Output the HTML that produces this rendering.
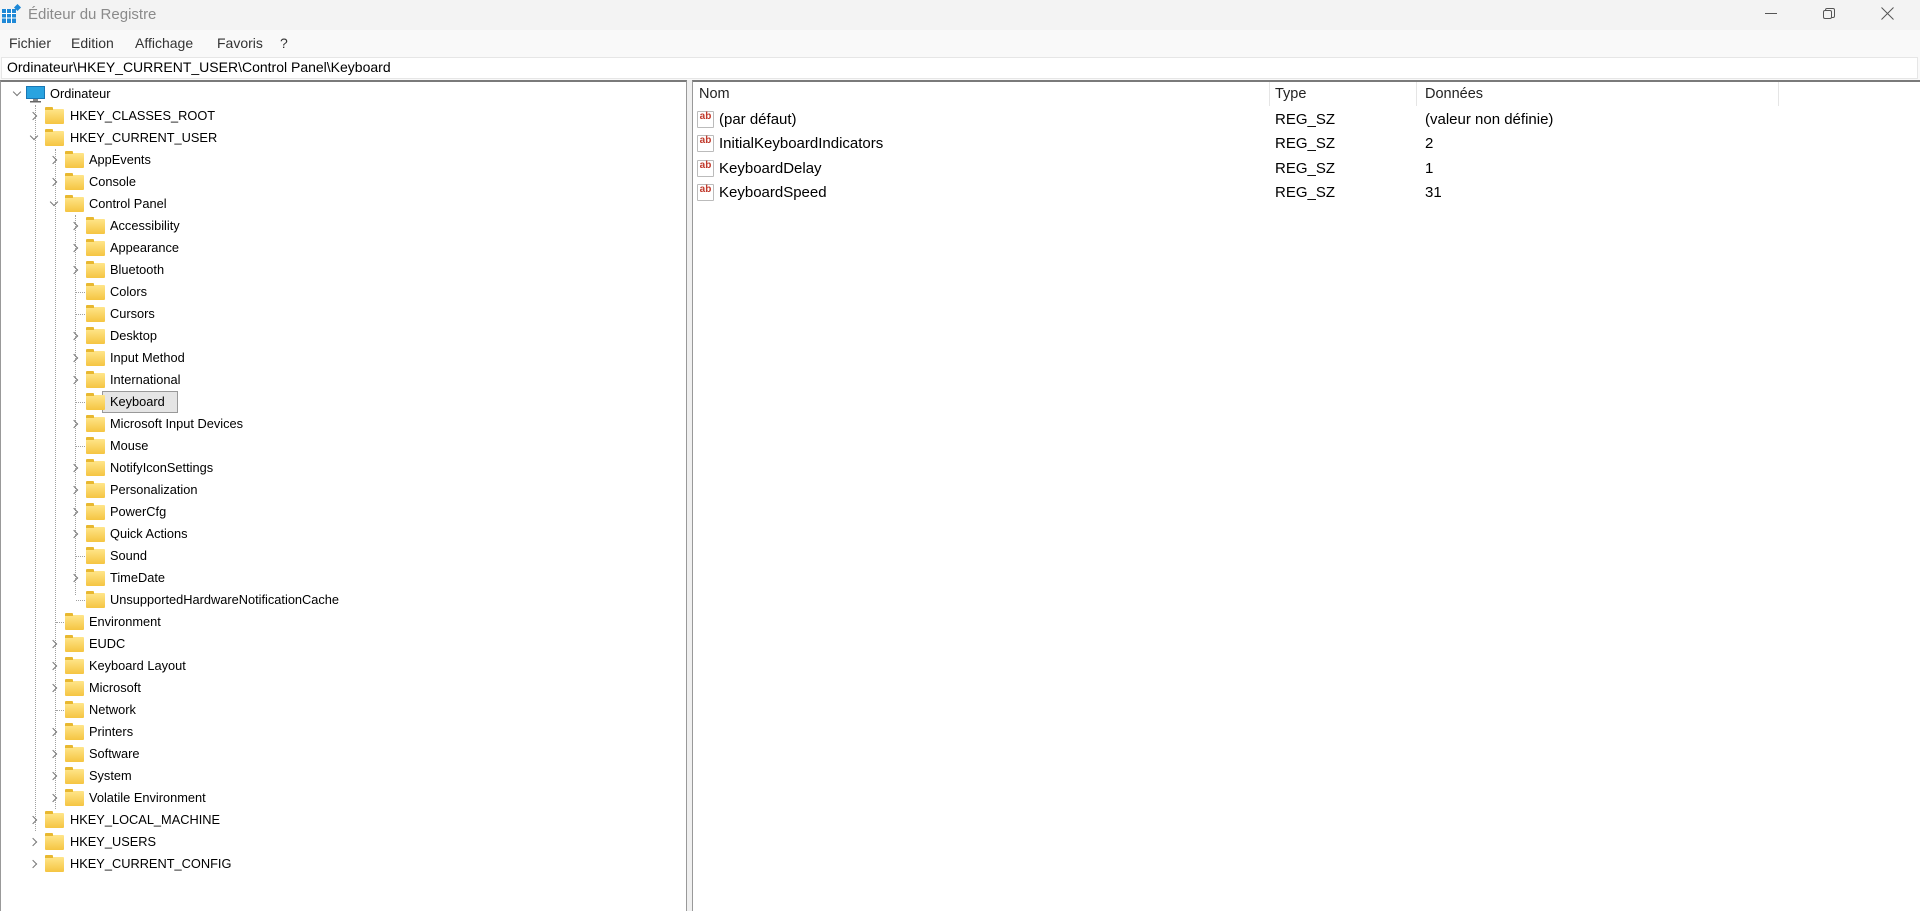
<!DOCTYPE html>
<html><head><meta charset="utf-8"><style>
*{margin:0;padding:0;box-sizing:border-box}
body{width:1920px;height:911px;overflow:hidden;background:#f0f0f0;font-family:"Liberation Sans",sans-serif;font-size:12.8px;color:#000;position:relative}
.abs{position:absolute}
.title{left:0;top:0;width:1920px;height:30px;background:#f3f3f3}
.menu{left:0;top:30px;width:1920px;height:26px;background:#f9f9f9}
.menu span{position:absolute;top:5px;color:#333;font-size:14px}
.addr{left:0;top:56px;width:1920px;height:24px;background:#f9f9f9}
.addrbox{left:1px;top:57px;width:1917px;height:22px;background:#fff;border:1px solid #e6e6e6}
.lp{left:0;top:80px;width:687px;height:831px;background:#fff;border-top:2px solid #7a7a7a;border-left:1px solid #999;border-right:1px solid #999}
.rp{left:692px;top:80px;width:1228px;height:831px;background:#fff;border-top:2px solid #7a7a7a;border-left:1px solid #999}
.row{position:absolute;height:22px;line-height:22px;white-space:nowrap;margin-top:1px}
.chev{position:absolute;width:6px;height:6px;border-right:1.3px solid #777;border-bottom:1.3px solid #777}
.cr{transform:rotate(-45deg)}
.cd{transform:rotate(45deg)}
.fold{position:absolute;width:19px;height:15px;background:linear-gradient(#ffe58a,#f5c542);border-radius:1px}
.fold:before{content:"";position:absolute;left:0;top:-2px;width:8px;height:3px;background:#e8b830;border-radius:1px 1px 0 0}
.vl{position:absolute;width:0;border-left:1px dotted #a0a0a0}
.hl{position:absolute;height:0;border-top:1px dotted #a0a0a0}
.sel{position:absolute;background:#e5e5e5;border:1px solid #999;}
.hdr{position:absolute;top:86px;color:#222;font-size:14.5px}
.cs{position:absolute;top:82px;width:1px;height:24px;background:#e5e5e5}
.rr{position:absolute;font-size:15px;white-space:nowrap;line-height:20px}
.ab{position:absolute;width:17px;height:17px;background:#fff;border:1px solid #bbb;border-radius:1px;font-size:10px;font-weight:bold;color:#c0392b;line-height:10px;text-align:center}
</style></head><body>
<div class="abs title"></div>
<svg class="abs" style="left:2px;top:4px" width="20" height="20" viewBox="0 0 20 20"><rect x="0" y="5" width="14" height="14" fill="#1e88d6"/><path d="M0 9.5H14M0 14H14M4.5 5V19M9.5 5V19" stroke="#fff" stroke-width="1"/><rect x="13" y="1" width="5" height="5" fill="#1e88d6" transform="rotate(45 15.5 3.5)"/></svg>
<div class="abs" style="left:28px;top:6px;font-size:15px;color:#8a8a8a">Éditeur du Registre</div>
<div class="abs" style="left:1765px;top:13px;width:12px;height:1px;background:#555"></div>
<div class="abs" style="left:1825px;top:8px;width:10px;height:10px;border:1px solid #555;border-radius:2px;background:#f3f3f3"></div>
<div class="abs" style="left:1823px;top:10px;width:9px;height:9px;border:1px solid #555;border-radius:2px;background:#f3f3f3"></div>
<svg class="abs" style="left:1881px;top:7px" width="13" height="13"><path d="M0.5 .5L12.5 12.5M12.5 .5L.5 12.5" stroke="#555" stroke-width="1"/></svg>
<div class="abs menu"><span style="left:9px">Fichier</span><span style="left:71px">Edition</span><span style="left:135px">Affichage</span><span style="left:217px">Favoris</span><span style="left:280px">?</span></div>
<div class="abs addr"></div><div class="abs addrbox"></div>
<div class="abs" style="left:7px;top:58px;font-size:14px;line-height:18px">Ordinateur\HKEY_CURRENT_USER\Control Panel\Keyboard</div>
<div class="abs lp"></div><div class="abs rp"></div>

<div class="vl" style="left:35px;top:105px;height:726px"></div>
<div class="vl" style="left:55px;top:149px;height:660px"></div>
<div class="vl" style="left:75px;top:215px;height:380px"></div>

<div class="sel" style="left:102px;top:391px;width:76px;height:22px"></div>

<div class="row" style="top:82px;left:0"><div class="chev cd" style="left:14px;top:6px"></div>
<svg style="position:absolute;left:26px;top:3px" width="19" height="18"><rect x="0.5" y="0.5" width="18" height="12" fill="#29a3e0" stroke="#1877b5"/><rect x="7" y="13" width="5" height="2" fill="#888"/><rect x="4" y="15" width="11" height="1.5" fill="#666"/></svg>
<span style="position:absolute;left:50px">Ordinateur</span></div>

<div class="row" style="top:104px"><div class="chev cr" style="left:30px;top:8px"></div><div class="fold" style="left:45px;top:4px"></div><span style="position:absolute;left:70px">HKEY_CLASSES_ROOT</span></div>
<div class="row" style="top:126px"><div class="chev cd" style="left:31px;top:6px"></div><div class="fold" style="left:45px;top:4px"></div><span style="position:absolute;left:70px">HKEY_CURRENT_USER</span></div>
<div class="row" style="top:148px"><div class="chev cr" style="left:50px;top:8px"></div><div class="fold" style="left:65px;top:4px"></div><span style="position:absolute;left:89px">AppEvents</span></div>
<div class="row" style="top:170px"><div class="chev cr" style="left:50px;top:8px"></div><div class="fold" style="left:65px;top:4px"></div><span style="position:absolute;left:89px">Console</span></div>
<div class="row" style="top:192px"><div class="chev cd" style="left:51px;top:6px"></div><div class="fold" style="left:65px;top:4px"></div><span style="position:absolute;left:89px">Control Panel</span></div>
<div class="row" style="top:214px"><div class="chev cr" style="left:71px;top:8px"></div><div class="fold" style="left:86px;top:4px"></div><span style="position:absolute;left:110px">Accessibility</span></div>
<div class="row" style="top:236px"><div class="chev cr" style="left:71px;top:8px"></div><div class="fold" style="left:86px;top:4px"></div><span style="position:absolute;left:110px">Appearance</span></div>
<div class="row" style="top:258px"><div class="chev cr" style="left:71px;top:8px"></div><div class="fold" style="left:86px;top:4px"></div><span style="position:absolute;left:110px">Bluetooth</span></div>
<div class="row" style="top:280px"><div class="hl" style="left:76px;top:11px;width:9px"></div><div class="fold" style="left:86px;top:4px"></div><span style="position:absolute;left:110px">Colors</span></div>
<div class="row" style="top:302px"><div class="hl" style="left:76px;top:11px;width:9px"></div><div class="fold" style="left:86px;top:4px"></div><span style="position:absolute;left:110px">Cursors</span></div>
<div class="row" style="top:324px"><div class="chev cr" style="left:71px;top:8px"></div><div class="fold" style="left:86px;top:4px"></div><span style="position:absolute;left:110px">Desktop</span></div>
<div class="row" style="top:346px"><div class="chev cr" style="left:71px;top:8px"></div><div class="fold" style="left:86px;top:4px"></div><span style="position:absolute;left:110px">Input Method</span></div>
<div class="row" style="top:368px"><div class="chev cr" style="left:71px;top:8px"></div><div class="fold" style="left:86px;top:4px"></div><span style="position:absolute;left:110px">International</span></div>
<div class="row" style="top:390px"><div class="hl" style="left:76px;top:11px;width:9px"></div><div class="fold" style="left:86px;top:4px"></div><span style="position:absolute;left:110px">Keyboard</span></div>
<div class="row" style="top:412px"><div class="chev cr" style="left:71px;top:8px"></div><div class="fold" style="left:86px;top:4px"></div><span style="position:absolute;left:110px">Microsoft Input Devices</span></div>
<div class="row" style="top:434px"><div class="hl" style="left:76px;top:11px;width:9px"></div><div class="fold" style="left:86px;top:4px"></div><span style="position:absolute;left:110px">Mouse</span></div>
<div class="row" style="top:456px"><div class="chev cr" style="left:71px;top:8px"></div><div class="fold" style="left:86px;top:4px"></div><span style="position:absolute;left:110px">NotifyIconSettings</span></div>
<div class="row" style="top:478px"><div class="chev cr" style="left:71px;top:8px"></div><div class="fold" style="left:86px;top:4px"></div><span style="position:absolute;left:110px">Personalization</span></div>
<div class="row" style="top:500px"><div class="chev cr" style="left:71px;top:8px"></div><div class="fold" style="left:86px;top:4px"></div><span style="position:absolute;left:110px">PowerCfg</span></div>
<div class="row" style="top:522px"><div class="chev cr" style="left:71px;top:8px"></div><div class="fold" style="left:86px;top:4px"></div><span style="position:absolute;left:110px">Quick Actions</span></div>
<div class="row" style="top:544px"><div class="hl" style="left:76px;top:11px;width:9px"></div><div class="fold" style="left:86px;top:4px"></div><span style="position:absolute;left:110px">Sound</span></div>
<div class="row" style="top:566px"><div class="chev cr" style="left:71px;top:8px"></div><div class="fold" style="left:86px;top:4px"></div><span style="position:absolute;left:110px">TimeDate</span></div>
<div class="row" style="top:588px"><div class="hl" style="left:76px;top:11px;width:9px"></div><div class="fold" style="left:86px;top:4px"></div><span style="position:absolute;left:110px">UnsupportedHardwareNotificationCache</span></div>
<div class="row" style="top:610px"><div class="hl" style="left:56px;top:11px;width:8px"></div><div class="fold" style="left:65px;top:4px"></div><span style="position:absolute;left:89px">Environment</span></div>
<div class="row" style="top:632px"><div class="chev cr" style="left:50px;top:8px"></div><div class="fold" style="left:65px;top:4px"></div><span style="position:absolute;left:89px">EUDC</span></div>
<div class="row" style="top:654px"><div class="chev cr" style="left:50px;top:8px"></div><div class="fold" style="left:65px;top:4px"></div><span style="position:absolute;left:89px">Keyboard Layout</span></div>
<div class="row" style="top:676px"><div class="chev cr" style="left:50px;top:8px"></div><div class="fold" style="left:65px;top:4px"></div><span style="position:absolute;left:89px">Microsoft</span></div>
<div class="row" style="top:698px"><div class="hl" style="left:56px;top:11px;width:8px"></div><div class="fold" style="left:65px;top:4px"></div><span style="position:absolute;left:89px">Network</span></div>
<div class="row" style="top:720px"><div class="chev cr" style="left:50px;top:8px"></div><div class="fold" style="left:65px;top:4px"></div><span style="position:absolute;left:89px">Printers</span></div>
<div class="row" style="top:742px"><div class="chev cr" style="left:50px;top:8px"></div><div class="fold" style="left:65px;top:4px"></div><span style="position:absolute;left:89px">Software</span></div>
<div class="row" style="top:764px"><div class="chev cr" style="left:50px;top:8px"></div><div class="fold" style="left:65px;top:4px"></div><span style="position:absolute;left:89px">System</span></div>
<div class="row" style="top:786px"><div class="chev cr" style="left:50px;top:8px"></div><div class="fold" style="left:65px;top:4px"></div><span style="position:absolute;left:89px">Volatile Environment</span></div>
<div class="row" style="top:808px"><div class="chev cr" style="left:30px;top:8px"></div><div class="fold" style="left:45px;top:4px"></div><span style="position:absolute;left:70px">HKEY_LOCAL_MACHINE</span></div>
<div class="row" style="top:830px"><div class="chev cr" style="left:30px;top:8px"></div><div class="fold" style="left:45px;top:4px"></div><span style="position:absolute;left:70px">HKEY_USERS</span></div>
<div class="row" style="top:852px"><div class="chev cr" style="left:30px;top:8px"></div><div class="fold" style="left:45px;top:4px"></div><span style="position:absolute;left:70px">HKEY_CURRENT_CONFIG</span></div>

<div class="hdr" style="left:699px">Nom</div>
<div class="hdr" style="left:1275px">Type</div>
<div class="hdr" style="left:1425px">Données</div>
<div class="cs" style="left:1269px"></div><div class="cs" style="left:1416px"></div><div class="cs" style="left:1778px"></div>

<div class="ab" style="left:697px;top:111px">ab</div><div class="rr" style="left:719px;top:110px">(par défaut)</div><div class="rr" style="left:1275px;top:110px">REG_SZ</div><div class="rr" style="left:1425px;top:110px">(valeur non définie)</div>
<div class="ab" style="left:697px;top:135px">ab</div><div class="rr" style="left:719px;top:134px">InitialKeyboardIndicators</div><div class="rr" style="left:1275px;top:134px">REG_SZ</div><div class="rr" style="left:1425px;top:134px">2</div>
<div class="ab" style="left:697px;top:160px">ab</div><div class="rr" style="left:719px;top:159px">KeyboardDelay</div><div class="rr" style="left:1275px;top:159px">REG_SZ</div><div class="rr" style="left:1425px;top:159px">1</div>
<div class="ab" style="left:697px;top:184px">ab</div><div class="rr" style="left:719px;top:183px">KeyboardSpeed</div><div class="rr" style="left:1275px;top:183px">REG_SZ</div><div class="rr" style="left:1425px;top:183px">31</div>
</body></html>
